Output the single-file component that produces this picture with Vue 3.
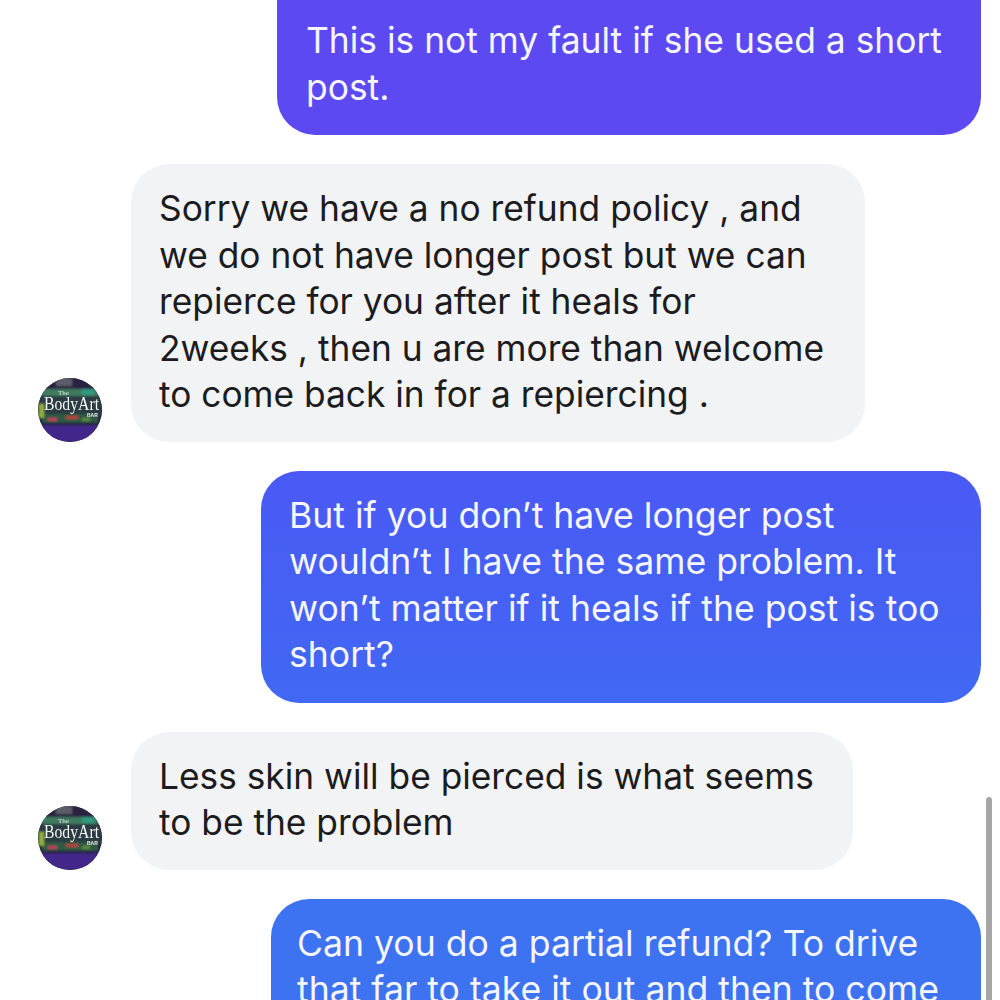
<script setup>
const messages = [
  { id: 1, mine: true, kind: 'm1', lines: ['This is not my fault if she used a short', 'post.'] },
  { id: 2, mine: false, kind: 't1', lines: ['Sorry we have a no refund policy , and', 'we do not have longer post but we can', 'repierce for you after it heals for', '2weeks , then u are more than welcome', 'to come back in for a repiercing .'] },
  { id: 3, mine: true, kind: 'm2', lines: ['But if you don’t have longer post', 'wouldn’t I have the same problem. It', 'won’t matter if it heals if the post is too', 'short?'] },
  { id: 4, mine: false, kind: 't2', lines: ['Less skin will be pierced is what seems', 'to be the problem'] },
  { id: 5, mine: true, kind: 'm3', lines: ['Can you do a partial refund? To drive', 'that far to take it out and then to come'] },
]
</script>

<template>
  <div class="thread">
    <div class="list">
      <div v-for="m in messages" :key="m.id" class="row" :class="{ mine: m.mine }">
        <svg v-if="!m.mine" class="avatar" viewBox="0 0 64 64" aria-hidden="true">
          <defs>
            <clipPath :id="`clip${m.id}`"><circle cx="32" cy="32" r="32" /></clipPath>
            <filter :id="`soft${m.id}`"><feGaussianBlur stdDeviation="1.3" /></filter>
            <filter :id="`text${m.id}`"><feGaussianBlur stdDeviation="0.35" /></filter>
          </defs>
          <g :clip-path="`url(#clip${m.id})`">
            <rect width="64" height="64" fill="#241f3c" />
            <g :filter="`url(#soft${m.id})`">
              <rect x="0" y="0" width="64" height="12" fill="#2a2340" />
              <rect x="18" y="0" width="16" height="8" fill="#5b5d68" />
              <rect x="4" y="11" width="56" height="7" fill="#3f7a5f" />
              <rect x="0" y="18" width="64" height="20" fill="#2b3a42" />
              <rect x="4" y="36" width="56" height="9" fill="#2d5a44" />
              <rect x="10" y="40" width="9" height="3" fill="#c23c5c" />
              <rect x="28" y="38" width="12" height="3" fill="#b8403a" />
              <rect x="44" y="40" width="8" height="3" fill="#5f8f3a" />
              <rect x="0" y="47" width="64" height="17" fill="#43288a" />
              <rect x="44" y="11" width="12" height="6" fill="#2f9a80" />
              <rect x="1" y="26" width="5" height="14" fill="#8fb03f" />
            </g>
            <g :filter="`url(#text${m.id})`">
              <text x="20" y="17" class="av-the">The</text>
              <text x="6" y="32" class="av-name" textLength="55" lengthAdjust="spacingAndGlyphs">BodyArt</text>
              <text x="49" y="39" class="av-bar">BAR</text>
            </g>
          </g>
        </svg>
        <div class="bubble" :class="m.kind">
          <div v-for="(line, i) in m.lines" :key="i" class="line">{{ line }}</div>
        </div>
      </div>
    </div>
    <div class="scrollbar"></div>
  </div>
</template>

<style scoped>
.thread {
  position: relative;
  width: 1000px;
  height: 1000px;
  overflow: hidden;
  background: #fff;
  font-family: Inter, "Liberation Sans", sans-serif;
}

.list {
  display: flex;
  flex-direction: column;
  gap: 29px;
  margin-top: -43px;
}

.row {
  display: flex;
  align-items: flex-end;
  gap: 29px;
  padding-left: 38px;
}

.row.mine {
  justify-content: flex-end;
  padding-right: 19px;
}

.avatar {
  width: 64px;
  height: 64px;
  flex: none;
}

.av-the {
  font: 7px "Liberation Serif", serif;
  fill: #e8e8e8;
}

.av-name {
  font: 19px "Liberation Serif", serif;
  fill: #f4f4f4;
}

.av-bar {
  font: bold 5px "Liberation Sans", sans-serif;
  fill: #e8e8e8;
}

.bubble {
  box-sizing: border-box;
  padding: 22px 0 23px 28px;
  border-radius: 38px;
  font-size: 35.3px;
  line-height: 46.5px;
  white-space: nowrap;
  color: #1c1c1e;
  background: #f2f3f5;
}

.mine .bubble {
  font-size: 35.6px;
  color: #f5f5ff;
}

/* top of this one is scrolled off the page */
.m1 {
  width: 704px;
  padding: 61px 0 24px 29px;
  background: #5c49f1;
}

.mine .m1 {
  font-size: 35.4px;
}

.t1 {
  width: 734px;
}

.m2 {
  width: 720px;
  padding-bottom: 24px;
  background: linear-gradient(180deg, #4a59f4, #4168f4);
}

.t2 {
  width: 722px;
}

.m3 {
  width: 710px;
  padding-left: 26px;
  background: #3d72f0;
}

.scrollbar {
  position: absolute;
  top: 797px;
  left: 986px;
  width: 6px;
  height: 220px;
  border-radius: 3px;
  background: #a6a6a6;
}
</style>

<style>
body {
  background: #fff;
}
</style>
